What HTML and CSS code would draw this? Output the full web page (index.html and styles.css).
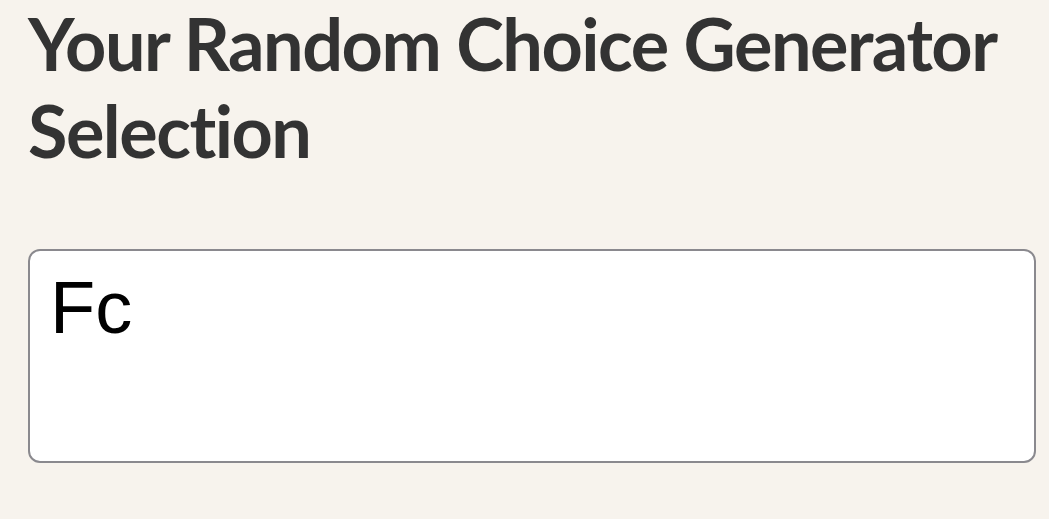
FILE: index.html
```html
<!DOCTYPE html>
<html>
<head>
    <title>Random Choice Generator</title>
    <link rel="stylesheet" href="styles.css">
</head>
<body>
    <div class="container">
        <h1>Your Random Choice Generator Selection</h1>
        <textarea class="choices">Fc</textarea>
    </div>
</body>
</html>
```

FILE: styles.css
```css
body { margin: 0; background: #f7f3ed; font-family: Lato, sans-serif; }
.container { padding: 0 13px 0 28px; }
h1 { margin: 0; font-size: 72px; line-height: 87px; font-weight: 700; color: #333; letter-spacing: -1.5px; font-variant-ligatures: none; }
.choices { display: block; box-sizing: border-box; width: 100%; height: 214px; margin-top: 75px; padding: 14px 20px; border: 2px solid #8a898e; border-radius: 12px; background: #fff; font-family: "Liberation Sans", Arial, sans-serif; font-size: 74px; line-height: 1.15; color: #000; resize: none; outline: none; }
```
